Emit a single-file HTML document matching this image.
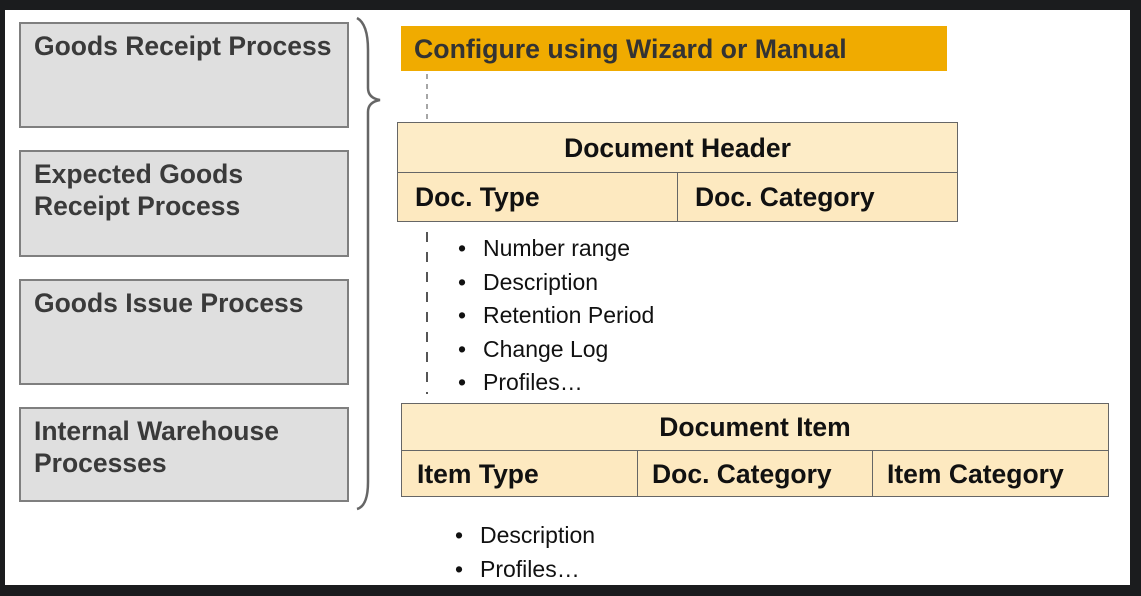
<!DOCTYPE html>
<html><head><meta charset="utf-8"><style>
*{margin:0;padding:0;box-sizing:border-box}
body{width:1141px;height:596px;background:#1b1c1e;position:relative;overflow:hidden;font-family:"Liberation Sans",sans-serif}
.page{position:absolute;left:5px;top:10px;width:1125px;height:575px;background:#fff}
.a{position:absolute}
.lb{position:absolute;left:19px;width:330px;background:#dfdfdf;border:2px solid #7f7f7f;color:#3a3a3a;font-weight:bold;font-size:26.5px;line-height:32px;padding:6px 0 0 13px;white-space:nowrap}
.cell{position:absolute;background:#fde9c0;border:1px solid #666;font-weight:bold;font-size:26.5px;color:#111;line-height:1;white-space:nowrap}
.hd{background:#fdecc7}
ul{position:absolute;list-style:none;font-size:23px;color:#111;line-height:33.5px;white-space:nowrap}
ul li:before{content:"•";display:inline-block;width:25px;font-size:23px}
</style></head><body>
<div class="page"></div>
<div class="lb" style="top:22px;height:106px">Goods Receipt Process</div>
<div class="lb" style="top:150px;height:107px">Expected Goods<br>Receipt Process</div>
<div class="lb" style="top:279px;height:106px">Goods Issue Process</div>
<div class="lb" style="top:407px;height:95px">Internal Warehouse<br>Processes</div>
<svg class="a" style="left:0;top:0" width="1141" height="596">
<path d="M357 18 Q368 24 368 50 L368 88 Q368 98 380 100 Q368 102 368 112 L368 482 Q368 506 357 509" fill="none" stroke="#666" stroke-width="2.5"/>
<line x1="427" y1="74" x2="427" y2="120" stroke="#888" stroke-width="1.5" stroke-dasharray="5,5"/>
<line x1="427" y1="232" x2="427" y2="394" stroke="#555" stroke-width="2" stroke-dasharray="10,10"/>
</svg>
<div class="a" style="left:401px;top:26px;width:546px;height:45px;background:#f0ab00;color:#333;font-weight:bold;font-size:26.7px;padding:8px 0 0 13px;white-space:nowrap">Configure using Wizard or Manual</div>
<div class="cell hd" style="left:397px;top:122px;width:561px;height:51px;text-align:center;padding-top:12px">Document Header</div>
<div class="cell" style="left:397px;top:172px;width:281px;height:50px;padding:11px 0 0 17px">Doc. Type</div>
<div class="cell" style="left:677px;top:172px;width:281px;height:50px;padding:11px 0 0 17px">Doc. Category</div>
<ul style="left:458px;top:232px"><li>Number range</li><li>Description</li><li>Retention Period</li><li>Change Log</li><li>Profiles…</li></ul>
<div class="cell hd" style="left:401px;top:403px;width:708px;height:48px;text-align:center;padding-top:10px">Document Item</div>
<div class="cell" style="left:401px;top:450px;width:237px;height:47px;padding:10px 0 0 15px">Item Type</div>
<div class="cell" style="left:637px;top:450px;width:236px;height:47px;padding:10px 0 0 14px">Doc. Category</div>
<div class="cell" style="left:872px;top:450px;width:237px;height:47px;padding:10px 0 0 14px">Item Category</div>
<ul style="left:455px;top:519px"><li>Description</li><li>Profiles…</li></ul>
</body></html>
